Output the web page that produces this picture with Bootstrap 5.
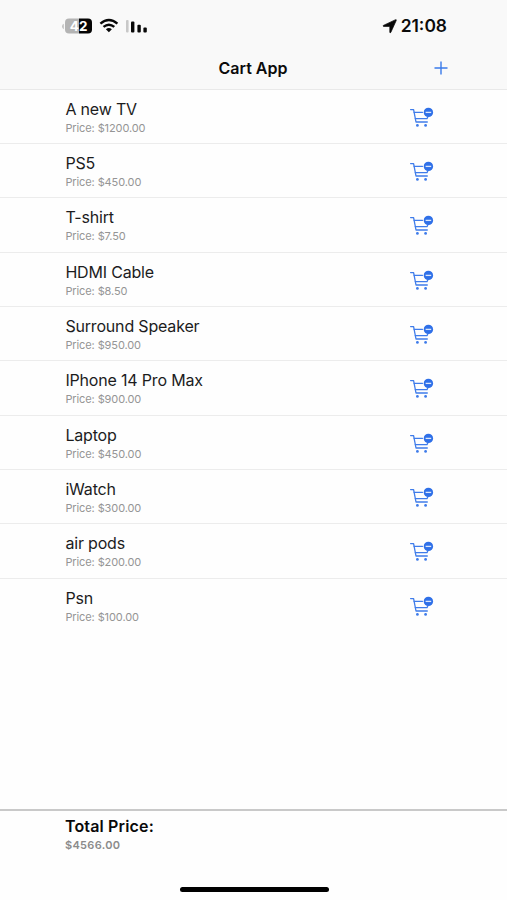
<!DOCTYPE html>
<html lang="en">
<head>
<meta charset="utf-8">
<meta name="viewport" content="width=device-width, initial-scale=1">
<title>Cart App</title>
<link href="https://cdn.jsdelivr.net/npm/bootstrap@5.3.0/dist/css/bootstrap.min.css" rel="stylesheet">
<style>
  body { font-family: Inter, "Liberation Sans", sans-serif; background: #fefefe; color: #1c1c1d; height: 900px; overflow: hidden; }
  .app-head { height: 89.5px; background: #f9f9f9; border-bottom: 1px solid #e9e9e9; color: #0b0b0b; }
  .status-bar { height: 50px; padding: 3px 60px 0 62px; }
  .clock { font-size: 17.4px; font-weight: 600; letter-spacing: 0; }
  .title-bar { display: grid; grid-template-columns: 1fr auto 1fr; height: 36px; padding: 0 59px 0 58px; }
  .title-bar h1 { font-size: 16px; font-weight: 600; letter-spacing: 0; padding-top: 2px; }
  .cart-row { height: 54.35px; padding: 9.1px 73.5px 0 65.4px; background: transparent; border-color: #ececec; color: inherit; }
  .cart-row:last-child { border-bottom: 0; }
  .cart-row svg { margin-top: 7.1px; }
  .item-name { font-size: 16px; line-height: 20px; letter-spacing: -.18px; }
  .item-price { font-size: 11px; line-height: 14px; margin-top: 2px; color: #959595; letter-spacing: -.1px; }
  .total-bar { height: 91px; border-top: 2px solid #c9c9c9; padding: 5px 65px 0; color: #090909; }
  .total-label { font-size: 16px; line-height: 20px; font-weight: 600; letter-spacing: .15px; }
  .total-sum { font-size: 11px; line-height: 14px; margin-top: 2px; font-weight: 600; color: #8b8b8b; letter-spacing: .3px; }
  .home-bar { width: 149px; height: 5px; border-radius: 3px; background: #000; margin: 0 -1px 8px 0; }
  svg { display: block; }
</style>
<script src="https://cdn.jsdelivr.net/npm/bootstrap@5.3.0/dist/js/bootstrap.bundle.min.js"></script>
</head>
<body class="d-flex flex-column">
<svg width="0" height="0" class="position-absolute" aria-hidden="true">
  <symbol id="cart-minus" viewBox="0 0 26 22">
    <g fill="none" stroke="#3f7cea" stroke-width="1.3" stroke-linecap="round" stroke-linejoin="round">
      <path d="M2.6 3.6H5.6L8 16H19.3"/>
      <path d="M6.1 6.3H14.5M7.3 12.6H19L19.8 11"/>
    </g>
    <circle cx="9.4" cy="19.4" r="1.4" fill="#3f7cea"/>
    <circle cx="17.6" cy="19.4" r="1.4" fill="#3f7cea"/>
    <circle cx="20.4" cy="6.4" r="4.7" fill="#2f70e8"/>
    <path d="M17.6 6.4H23.2" stroke="#dce8fd" stroke-width="1.3"/>
  </symbol>
</svg>
<header class="app-head flex-shrink-0">
  <div class="status-bar d-flex align-items-center justify-content-between">
    <div class="d-flex align-items-center">
      <svg width="88" height="20" viewBox="0 0 88 20">
        <path d="M1.8 6.8Q0 7.6 0 9.5T1.8 12.2Z" fill="#c2c2c2"/>
        <path d="M7 1.5H17V16.5H7Q3 16.5 3 12.5V5.5Q3 1.5 7 1.5Z" fill="#b4b4b4"/>
        <path d="M17 1.5H26Q30 1.5 30 5.5V12.5Q30 16.5 26 16.5H17Z" fill="#050505"/>
        <text x="16.6" y="14" text-anchor="middle" font-family="Inter, sans-serif" font-size="13.5" font-weight="700" fill="#fff">42</text>
        <g fill="none" stroke="#080808" stroke-width="2.4">
          <path d="M38.4 6.6Q46.9 -.7 55.4 6.6"/>
          <path d="M41.5 9.9Q46.9 5.4 52.3 9.9"/>
        </g>
        <path d="M43.9 12.2Q46.9 9.9 49.9 12.2L46.9 15.3Z" fill="#080808"/>
        <g fill="#080808">
          <rect x="64" y="3" width="2.6" height="12.5" rx="1" fill="#c8c8c8"/>
          <rect x="69" y="4.5" width="3.4" height="11" rx="1"/>
          <rect x="75.4" y="7.7" width="3.4" height="7.8" rx="1"/>
          <rect x="81.4" y="10.5" width="3.4" height="5" rx="1"/>
        </g>
      </svg>
    </div>
    <div class="d-flex align-items-center gap-1">
      <svg width="15" height="15" viewBox="0 0 15 15"><path d="M14.2 .7Q14.5 .8 14.2 1.6L8.8 13.4Q8.2 14.4 7.8 13.3V7.4H1.6Q.4 7 1.4 6.4L13.1 .9Q13.9 .5 14.2 .7Z" fill="#080808" stroke="#080808" stroke-width=".7" stroke-linejoin="round"/></svg>
      <span class="clock">21:08</span>
    </div>
  </div>
  <div class="title-bar align-items-center">
    <span></span>
    <h1 class="m-0">Cart App</h1>
    <svg class="ms-auto" width="14" height="14" viewBox="0 0 14 14" role="img" aria-label="Add"><path d="M7 .5V13.5M.5 7H13.5" stroke="#3a7bea" stroke-width="1.4" fill="none"/></svg>
  </div>
</header>
<main class="flex-grow-1">
  <ul class="list-group list-group-flush">
    <li class="list-group-item cart-row d-flex justify-content-between"><div><div class="item-name">A new TV</div><div class="item-price">Price: $1200.00</div></div><svg width="26" height="22"><use href="#cart-minus"/></svg></li>
    <li class="list-group-item cart-row d-flex justify-content-between"><div><div class="item-name">PS5</div><div class="item-price">Price: $450.00</div></div><svg width="26" height="22"><use href="#cart-minus"/></svg></li>
    <li class="list-group-item cart-row d-flex justify-content-between"><div><div class="item-name">T-shirt</div><div class="item-price">Price: $7.50</div></div><svg width="26" height="22"><use href="#cart-minus"/></svg></li>
    <li class="list-group-item cart-row d-flex justify-content-between"><div><div class="item-name">HDMI Cable</div><div class="item-price">Price: $8.50</div></div><svg width="26" height="22"><use href="#cart-minus"/></svg></li>
    <li class="list-group-item cart-row d-flex justify-content-between"><div><div class="item-name">Surround Speaker</div><div class="item-price">Price: $950.00</div></div><svg width="26" height="22"><use href="#cart-minus"/></svg></li>
    <li class="list-group-item cart-row d-flex justify-content-between"><div><div class="item-name">IPhone 14 Pro Max</div><div class="item-price">Price: $900.00</div></div><svg width="26" height="22"><use href="#cart-minus"/></svg></li>
    <li class="list-group-item cart-row d-flex justify-content-between"><div><div class="item-name">Laptop</div><div class="item-price">Price: $450.00</div></div><svg width="26" height="22"><use href="#cart-minus"/></svg></li>
    <li class="list-group-item cart-row d-flex justify-content-between"><div><div class="item-name">iWatch</div><div class="item-price">Price: $300.00</div></div><svg width="26" height="22"><use href="#cart-minus"/></svg></li>
    <li class="list-group-item cart-row d-flex justify-content-between"><div><div class="item-name">air pods</div><div class="item-price">Price: $200.00</div></div><svg width="26" height="22"><use href="#cart-minus"/></svg></li>
    <li class="list-group-item cart-row d-flex justify-content-between"><div><div class="item-name">Psn</div><div class="item-price">Price: $100.00</div></div><svg width="26" height="22"><use href="#cart-minus"/></svg></li>
  </ul>
</main>
<footer class="total-bar flex-shrink-0 d-flex flex-column">
  <div class="total-label">Total Price:</div>
  <div class="total-sum">$4566.00</div>
  <div class="home-bar mt-auto align-self-center"></div>
</footer>
</body>
</html>
